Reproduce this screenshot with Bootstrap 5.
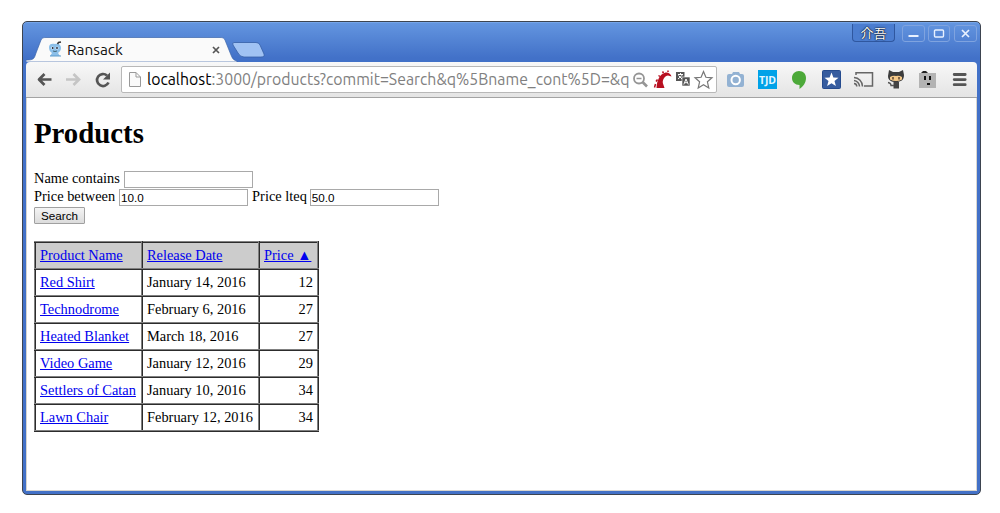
<!DOCTYPE html>
<html lang="en">
<head>
<meta charset="utf-8">
<title>Ransack</title>
<link href="https://cdn.jsdelivr.net/npm/bootstrap@5.3.0/dist/css/bootstrap.min.css" rel="stylesheet">
<style>
body{background:#fff;height:513px;padding:21px 19px 18px 22px;overflow:hidden}
.frame{height:474px;width:959px;border:1px solid #3d4450;border-radius:5px;background:linear-gradient(#6496e0,#4271c8 36px,#4371c7);padding:0 3px 3px;box-shadow:inset 0 1px #75a5e9}
.titlebar{height:40px}
.tabs{width:245px;height:26px;margin-top:14px;position:relative}
.tabs svg.shape{position:absolute;left:0;top:0}
.tab-label{position:absolute;left:22px;top:1px;height:25px;width:172px;font:15.4px/25px Ubuntu,"Noto Sans",sans-serif;color:#111}
.wm{height:17px;margin-top:3px;border:1px solid #7fa3df;border-radius:3px;color:#fff}
.ime{width:43px;border-top:0;border-color:#2f579f;border-radius:0 0 4px 4px;background:#4b7dd0;margin-top:2px;font:13px/17px "Noto Sans CJK JP",sans-serif;text-shadow:0 0 2px #000,0 0 1px #000;height:18px}
.toolbar{height:36px;background:linear-gradient(#f8f8f8,#e4e4e4);border-bottom:1px solid #a3a3a3;border-radius:4px 4px 0 0;position:relative}
.omni{width:596px;height:27px;margin-left:10px;border:1px solid #b8b8b8;border-radius:2px;background:#fff}
.url{font:15.83px/25px Ubuntu,"Noto Sans",sans-serif;color:#808080;width:484px;margin-left:5px}
.url b{font-weight:400;color:#000}
.page{height:393px;background:#fff;border:solid #d8d5ce;border-width:0 1px 1px;padding:0 7px;font:14.4px/18px "Liberation Serif",serif;color:#000}
.page h1{font:bold 28.8px/33px "Liberation Serif",serif;padding-top:19px;margin:0 0 20px}
.line{height:18px}
.line label{line-height:16px;align-self:flex-start}
.field{width:129px;height:17px;border:1px solid #a9a9a9;padding:0 1px;font:11.7px/15px "Liberation Sans",sans-serif;color:#000;margin:0 4px;border-radius:0;outline:0}
.field.upper{margin-left:3px}
.go{width:51px;height:17px;border:1px solid #a0a0a0;border-radius:1px;background:linear-gradient(#f4f4f4,#dcdcdc);font:11.7px/14px "Liberation Sans",sans-serif;padding:0;color:#000;display:block;margin-top:1px}
.grid{table-layout:fixed;width:285px;margin-top:17px;border-collapse:collapse}
.grid th,.grid td{height:27px;border:2px ridge gray;padding:0 4px 2px;line-height:22px;font-weight:400;white-space:nowrap}
.grid th{background:#ccc}
.grid a{color:#00e;text-decoration:underline;text-underline-offset:1px;text-decoration-thickness:1px}
svg{display:block;flex:none}
</style>
</head>
<body>
<div class="frame">
<div class="titlebar d-flex justify-content-between">
<div class="tabs">
<svg class="shape" width="245" height="26"><path d="M0 26V24C8 24 8 23 10 17L15 4C16 2 17 1.500 20 1.500H194C197 1.500 198 2 199 4L205 19C207 24 208 24 211 25V26Z" fill="#fafafa" stroke="#3c66ab" stroke-width=".7"/><path d="M208 6.500H230Q233 6.500 234 9L238 18Q239 21 235 21H218Q214 21 212 17L207 9Q206 6.500 208 6.500Z" fill="#a0c2f3" stroke="#355ea6" stroke-width=".8"/></svg>
<div class="tab-label d-flex align-items-center">
<svg width="14" height="17" viewBox="0 0 14 17"><path d="M1 6C1 3 4 2 7 3C11 2 13 4 13 7C13 10 11 11 10 12L12 15H2L4 12C2 11 1 9 1 6Z" fill="#8bbfe9"/><path d="M2 15H13" stroke="#5d9bcb"/><circle cx="4.500" cy="7" r="1.600" fill="#d8ecfa"/><circle cx="9" cy="7" r="1.600" fill="#d8ecfa"/><circle cx="4.700" cy="7" r=".9" fill="#223"/><circle cx="9" cy="7" r=".9" fill="#223"/><path d="M5 10Q7 11 9 10" stroke="#467" fill="none"/><path d="M9.500 3L10.500 1.500L13 1" stroke="#333" stroke-width="1.500" fill="none"/></svg>
<span style="margin-left:5px">Ransack</span>
<svg class="ms-auto" width="8" height="8"><path d="M1 1L7 7M7 1L1 7" stroke="#555" stroke-width="1.700"/></svg>
</div>
</div>
<div class="d-flex">
<div class="wm ime text-center">介吾</div>
<div class="wm" style="width:23px;margin-left:7px"><svg width="21" height="15"><path d="M5.500 10H15.500" stroke="#e8f1ff" stroke-width="2"/></svg></div>
<div class="wm" style="width:22px;margin-left:3px"><svg width="20" height="15"><rect x="5.500" y="4" width="9" height="7" rx="1" fill="none" stroke="#e8f1ff" stroke-width="1.400"/></svg></div>
<div class="wm" style="width:23px;margin-left:4px"><svg width="21" height="15"><path d="M7 4L14 11M14 4L7 11" stroke="#e8f1ff" stroke-width="1.700"/></svg></div>
</div>
</div>
<div class="toolbar d-flex align-items-center">
<svg width="85" height="35" viewBox="0 0 85 35"><g fill="none" stroke-width="2.700"><path d="M25.500 17.500H12.500M18.500 12L13 17.500L18.500 23" stroke="#555" stroke-linejoin="round"/><path d="M40 17.500H53M47.500 12L53 17.500L47.500 23" stroke="#c5c5c5"/><path d="M82.500 20.500A6 6 0 1 1 81 13.500" stroke="#555"/></g><path d="M84 10.500V17.500H77Z" fill="#555"/></svg>
<div class="omni d-flex align-items-center">
<svg width="20" height="25"><path d="M7.500 5.500H14L18.500 10V19.500H7.500ZM14 5.500V10H18.500" fill="#fafafa" stroke="#999"/></svg>
<div class="url text-nowrap overflow-hidden"><b>localhost</b>:3000/products?commit=Search&amp;q%5Bname_cont%5D=&amp;q</div>
<svg width="84" height="25" viewBox="631 67 84 25">
<g fill="none" stroke="#959595"><circle cx="639" cy="78.500" r="5" stroke-width="1.800"/><path d="M642.500 82L647 86.500" stroke-width="2.600"/><path d="M636.500 78.500H641.500" stroke-width="1.500"/></g>
<path d="M656.500 88C657 80 660 74 665 72.800C668 72 671 74 671.500 76.500L668 75.500C665 76 662.500 79 662.800 83L664.500 88Z" fill="#b80f20"/><path d="M654.500 87.500L655.500 84M656 81.500L657.500 79.500M658.500 75.500L660 76.500M662.500 71.500L663.500 73M668 70.500V72" stroke="#b80f20" stroke-width="1.500"/>
<path d="M676 72H684.500V81H676Z" fill="#555"/><path d="M682 77H690V86H682Z" fill="#555" stroke="#fff" stroke-width=".6"/><path d="M678 74.500H683M680.500 73V74.500M678 79L682.500 75M678.500 75.500L682 79M683.800 84.500L686 79L688.300 84.500M685 82.700H687.300" fill="none" stroke="#fff"/>
<path d="M703.500 71.500L705.900 77.300L712 77.800L707.400 81.800L708.800 88L703.500 84.700L698.200 88L699.600 81.800L695 77.800L701.100 77.300Z" fill="#fff" stroke="#777" stroke-width="1.200"/></svg>
</div>
<svg width="260" height="35" viewBox="717 62 260 35">
<rect x="727" y="74" width="17" height="13" rx="2" fill="#93b2d3"/><path d="M732 74L733 72H739L740 74Z" fill="#93b2d3"/><circle cx="735.700" cy="80" r="4.200" fill="none" stroke="#fff" stroke-width="2"/>
<rect x="758" y="70" width="19" height="19" fill="#00a2e8"/><text x="759" y="83.500" font-size="10.500" textLength="17" font-weight="bold" font-family="Open Sans,sans-serif" fill="#e2f6ff">TJD</text>
<path d="M799 71C803.500 71 806 74 806 78C806 83 803 86.500 799.500 89V85C795 85 792 82 792 78C792 74 795 71 799 71Z" fill="#4ca939"/>
<rect x="822.500" y="70.500" width="18" height="18" rx="1" fill="#365c9f" stroke="#254b8e"/><path d="M831.500 72.500L833.400 77.500L838.500 77.800L834.500 81L835.900 86L831.500 83.200L827.100 86L828.500 81L824.500 77.800L829.600 77.500Z" fill="#fff"/>
<g fill="none" stroke="#666" stroke-width="1.500"><path d="M856 75V72.700H872.500V86H864"/><path d="M854 77.500A9 9 0 0 1 862.500 86.500M854 80.500A6 6 0 0 1 859.500 86.500M854 83.500A3 3 0 0 1 856.800 86.500"/></g>
<path d="M889 70L893 72H899L903 70L904 75C904 80 901 82 896 82C891 82 888 80 888 76Z" fill="#3d3d3d"/><path d="M890 77Q893 75 896 76Q899 75 902 77V79.500Q896 82.500 890 79.500Z" fill="#f4c888"/><path d="M893 77V79.500M899 77V79.500" stroke="#594431" stroke-width="1.500"/><path d="M893.500 82H899V88.500H893.500Z" fill="#444"/><path d="M888 82.500Q891 83 891 85.500H894" fill="none" stroke="#555" stroke-width="1.300"/>
<rect x="919" y="73" width="17" height="15" fill="#b3b3b3"/><path d="M921 73L923 71H926L928 73Z" fill="#222"/><path d="M925 76V80M930 76V80" stroke="#111" stroke-width="2"/><path d="M927 84H930" stroke="#111" stroke-width="2"/>
<path d="M954.200 74.500H965.200M954.200 79.600H965.200M954.200 84.700H965.200" stroke="#555" stroke-width="2.800" stroke-linecap="round"/></svg>
</div>
<div class="page">
<h1>Products</h1>
<form onsubmit="return false">
<div class="line d-flex align-items-end text-nowrap"><label for="n">Name contains</label><input id="n" class="field"></div>
<div class="line d-flex align-items-end text-nowrap"><label for="a">Price between</label><input id="a" class="field" value="10.0"><label for="z">Price lteq</label><input id="z" class="field upper" value="50.0"></div>
<button class="go" type="submit">Search</button>
</form>
<table class="grid">
<colgroup><col width="107"><col width="117"><col width="59"></colgroup>
<thead><tr><th><a href="#">Product Name</a></th><th><a href="#">Release Date</a></th><th><a href="#">Price ▲</a></th></tr></thead>
<tbody>
<tr><td><a href="#">Red Shirt</a></td><td>January 14, 2016</td><td class="text-end">12</td></tr>
<tr><td><a href="#">Technodrome</a></td><td>February 6, 2016</td><td class="text-end">27</td></tr>
<tr><td><a href="#">Heated Blanket</a></td><td>March 18, 2016</td><td class="text-end">27</td></tr>
<tr><td><a href="#">Video Game</a></td><td>January 12, 2016</td><td class="text-end">29</td></tr>
<tr><td><a href="#">Settlers of Catan</a></td><td>January 10, 2016</td><td class="text-end">34</td></tr>
<tr><td><a href="#">Lawn Chair</a></td><td>February 12, 2016</td><td class="text-end">34</td></tr>
</tbody>
</table>
</div>
</div>
<script src="https://cdn.jsdelivr.net/npm/bootstrap@5.3.0/dist/js/bootstrap.bundle.min.js"></script>
</body>
</html>
